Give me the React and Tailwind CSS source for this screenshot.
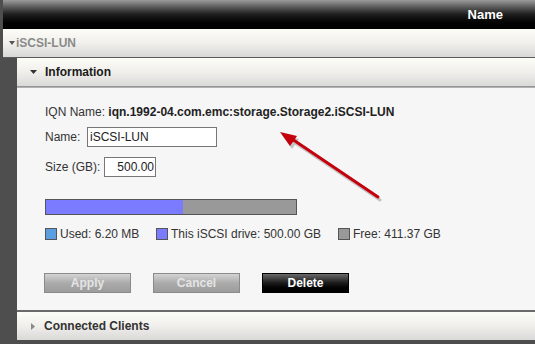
export default function App() {
  const font = { fontFamily: '"Liberation Sans", Arial, sans-serif' };
  return (
    <div className="relative w-[535px] h-[344px] overflow-hidden bg-[#4e4e4e] flex flex-col" style={font}>
      {/* header */}
      <div className="ml-[3px] h-[29px] shrink-0 bg-gradient-to-b from-[#9c9c9c] via-[#1e1e1e] to-[#000] flex items-center justify-end pr-[32px]">
        <span className="text-white font-bold text-[13px] leading-none">Name</span>
      </div>
      {/* iSCSI-LUN row */}
      <div className="ml-[3px] h-[29px] shrink-0 bg-gradient-to-b from-[#fdfdf8] via-[#f1f0ec] to-[#d8d8d8] border-b border-[#5a5a5a] flex items-center">
        <svg width="6" height="4" viewBox="0 0 6 4" className="ml-[6px] mr-[1px]"><polygon points="0,0 6,0 3,4" fill="#555" /></svg>
        <span className="text-[#8a8a8a] font-bold text-[12px] leading-none">iSCSI-LUN</span>
      </div>
      {/* inner panel */}
      <div className="ml-[17px] flex-1 flex flex-col">
        <div className="h-[28px] shrink-0 bg-gradient-to-b from-[#fdfdf8] via-[#f0efeb] to-[#d9d9d9] flex items-center">
          <svg width="7" height="4" viewBox="0 0 7 4" className="ml-[13px] mr-[8px]"><polygon points="0,0 7,0 3.5,4" fill="#333" /></svg>
          <span className="text-[#1a1a1a] font-bold text-[12px] leading-none">Information</span>
        </div>
        <div className="h-[2px] shrink-0 bg-gradient-to-b from-[#8a8a8a] to-[#bdbdbd]" />
        <div className="h-[222px] shrink-0 bg-[#f6f6f6] flex flex-col pl-[28px] text-[12px] text-[#333]">
          <div className="mt-[17px] h-[14px] leading-[14px]">
            IQN Name: <span className="font-bold text-[#222]">iqn.1992-04.com.emc:storage.Storage2.iSCSI-LUN</span>
          </div>
          <div className="mt-[8px] h-[20px] flex items-center">
            <span className="w-[42px]">Name:</span>
            <div className="w-[130px] h-[20px] bg-white border border-[#777] flex items-center pl-[2px] text-[#222]">iSCSI-LUN</div>
          </div>
          <div className="mt-[10px] h-[20px] flex items-center">
            <span className="w-[59px]">Size (GB):</span>
            <div className="w-[52px] h-[20px] bg-white border border-[#777] flex items-center justify-end pr-[1px] text-[#222]">500.00</div>
          </div>
          <div className="mt-[22px] w-[252px] h-[16px] border border-[#555] bg-[#999] flex">
            <div className="w-[137px] h-full bg-[#7b7bff]" />
          </div>
          <div className="mt-[13px] h-[12px] flex items-center leading-none">
            <div className="w-[12px] h-[12px] border border-[#555] bg-[#5aa0e0] mr-[3px]" />
            <span className="w-[96px]">Used: 6.20 MB</span>
            <div className="w-[12px] h-[12px] border border-[#555] bg-[#7b7bff] mr-[3px]" />
            <span className="w-[167px]">This iSCSI drive: 500.00 GB</span>
            <div className="w-[12px] h-[12px] border border-[#555] bg-[#999] mr-[3px]" />
            <span>Free: 411.37 GB</span>
          </div>
          <div className="mt-[33px] ml-[-1px] flex gap-[22px]">
            <div className="w-[87px] h-[20px] border border-[#8a8a8a] bg-gradient-to-b from-[#d4d4d4] via-[#ababab] to-[#9c9c9c] flex items-center justify-center font-bold text-[#e4e4e4]">Apply</div>
            <div className="w-[87px] h-[20px] border border-[#8a8a8a] bg-gradient-to-b from-[#d4d4d4] via-[#ababab] to-[#9c9c9c] flex items-center justify-center font-bold text-[#e4e4e4]">Cancel</div>
            <div className="w-[87px] h-[20px] border border-black bg-gradient-to-b from-[#6a6a6a] via-[#1c1c1c] to-[#000] flex items-center justify-center font-bold text-white">Delete</div>
          </div>
        </div>
        <div className="h-[2px] shrink-0 bg-[#6a6a6a]" />
        <div className="h-[28px] shrink-0 bg-gradient-to-b from-[#fdfdf8] via-[#f0efeb] to-[#d9d9d9] flex items-center">
          <svg width="4" height="7" viewBox="0 0 4 7" className="ml-[14px] mr-[9px]"><polygon points="0,0 4,3.5 0,7" fill="#888" /></svg>
          <span className="text-[#333] font-bold text-[12px] leading-none">Connected Clients</span>
        </div>
      </div>
      {/* red annotation arrow */}
      <svg className="absolute left-0 top-0 pointer-events-none" width="535" height="344" viewBox="0 0 535 344">
        <g transform="translate(2,3)" opacity="0.35">
          <line x1="378" y1="197" x2="292" y2="139" stroke="#666" strokeWidth="3" strokeLinecap="round" />
          <polygon points="280,132 297,136 290,146" fill="#666" />
        </g>
        <line x1="378" y1="197" x2="292" y2="139" stroke="#c4000c" strokeWidth="3" strokeLinecap="round" />
        <polygon points="280,132 297,136 290,146" fill="#c4000c" />
      </svg>
    </div>
  );
}
